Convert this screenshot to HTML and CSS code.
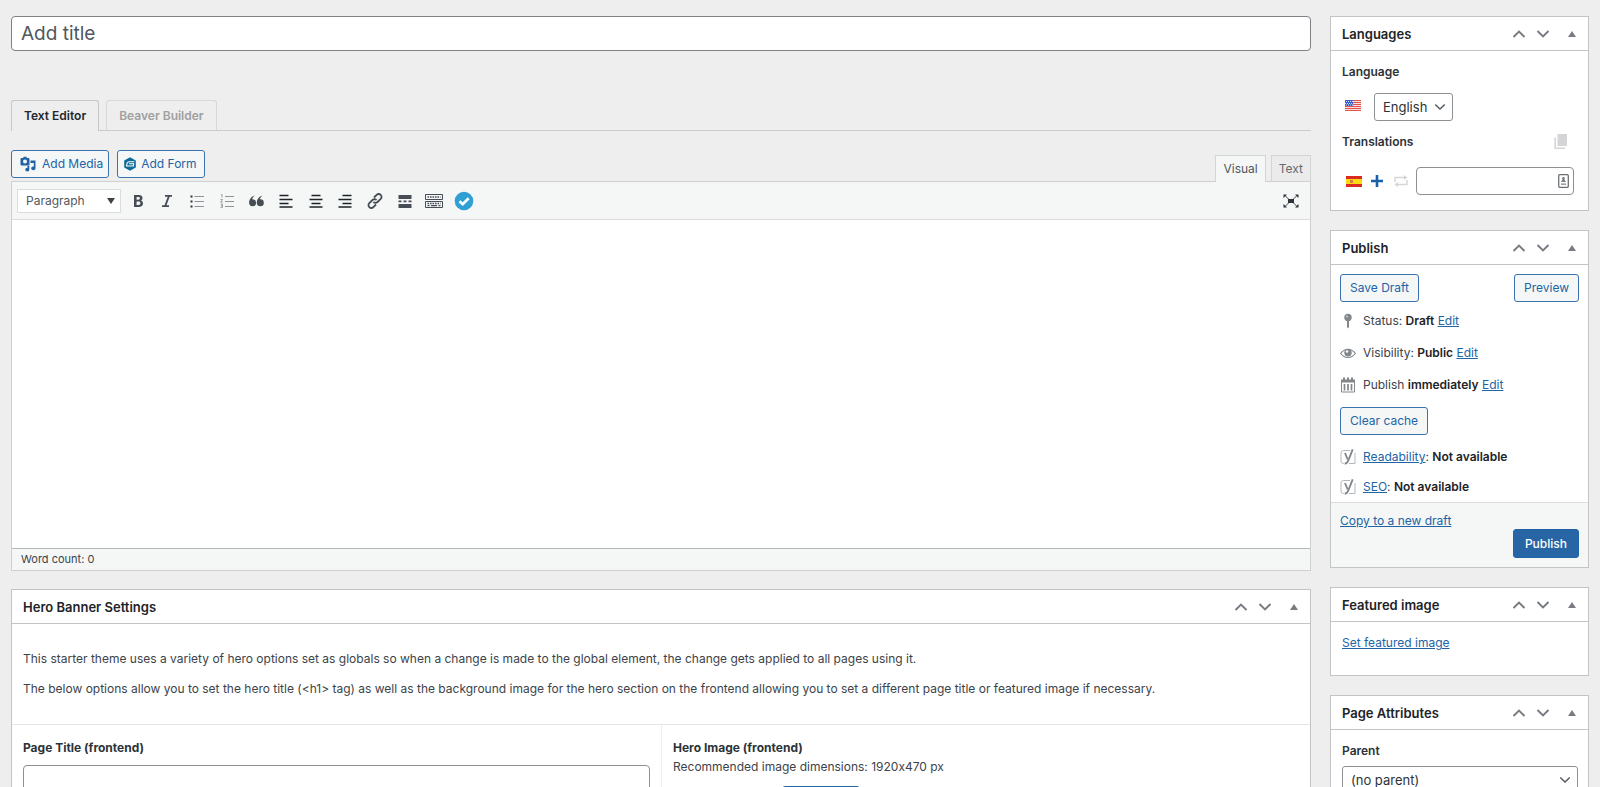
FILE: index.html
```html
<!DOCTYPE html>
<html lang="en">
<head>
    <meta charset="UTF-8">
    <meta name="viewport" content="width=device-width, initial-scale=1.0">
    <title>Add New Page</title>
    <link rel="stylesheet" href="styles.css">
</head>
<body>
    <!-- shared icons -->
    <svg class="sprite" aria-hidden="true">
        <symbol id="chevron-up" viewBox="0 0 14 14"><path d="M1.5 10 7 4.6 12.5 10" fill="none" stroke="currentColor" stroke-width="2"/></symbol>
        <symbol id="chevron-down" viewBox="0 0 14 14"><path d="M1.5 4 7 9.4 12.5 4" fill="none" stroke="currentColor" stroke-width="2"/></symbol>
        <symbol id="triangle-up" viewBox="0 0 8 6"><path d="M4 0 8 6H0z" fill="currentColor"/></symbol>
        <symbol id="yoast" viewBox="0 0 16 16">
            <path d="M10 1.500H3.500A2.500 2.500 0 0 0 1 4v8a2.500 2.500 0 0 0 2.500 2.500H4M15 4v10.500H9" fill="none" stroke="#b4b7ba" stroke-width="1"/>
            <path d="M5 4 7.700 10.500" fill="none" stroke="#82878c" stroke-width="1.900"/>
            <path d="M12.700.3 8.500 11C7.600 13.500 6.800 14.600 4.700 14.800" fill="none" stroke="#82878c" stroke-width="1.900"/>
        </symbol>
    </svg>

    <div class="wrap">
        <main class="main">
            <input class="title-input" type="text" placeholder="Add title" aria-label="Add title">

            <div class="builder-tabs">
                <a class="builder-tab active" href="#editor">Text Editor</a>
                <a class="builder-tab" href="#builder">Beaver Builder</a>
            </div>

            <div class="editor-tools">
                <div class="media-buttons">
                    <button class="button button-media" type="button">
                        <svg width="16" height="16" viewBox="0 0 16 16"><path fill="currentColor" fill-rule="evenodd" d="M1.500 2H3l.8-1.200h2.500L7 2h1.500a1 1 0 0 1 1 1v5.500a1 1 0 0 1-1 1h-7a1 1 0 0 1-1-1V3a1 1 0 0 1 1-1zM5 3.600a2 2 0 1 0 0 4 2 2 0 0 0 0-4z"/><path fill="currentColor" d="M10.500 4.500H15.500V12.300a2.200 1.900 0 1 1-1.700-1.800V7H10.500zM9.300 9.500V13.500a2 1.900 0 1 1-1.700-1.800V10.500H6.500l2.800-1z"/></svg>
                        Add Media
                    </button>
                    <button class="button button-form" type="button">
                        <svg width="12" height="14" viewBox="0 0 12 14"><path fill="#0e6a96" d="M6 .2 11.800 3.500v7L6 13.800.2 10.500v-7z"/><path d="M10.300 4.700H5.200C3.500 4.700 2.700 6 2.500 9h6.800l.3-2.200H5" fill="none" stroke="#fff" stroke-width="1.100"/></svg>
                        Add Form
                    </button>
                </div>
                <div class="switch-tabs">
                    <button class="switch-tab active" type="button">Visual</button>
                    <button class="switch-tab" type="button">Text</button>
                </div>
            </div>

            <section class="editor" id="editor">
                <div class="toolbar">
                    <div class="select-wrap format-select">
                        <select aria-label="Format">
                            <option>Paragraph</option>
                        </select>
                        <svg width="8" height="6" viewBox="0 0 8 6"><path d="M0 0h8L4 6z" fill="#3c434a"/></svg>
                    </div>
                    <div class="tools">
                        <button class="tool" type="button" title="Bold"><svg width="16" height="16" viewBox="0 0 16 16"><path fill="currentColor" fill-rule="evenodd" d="M4 2h4.700c2.500 0 3.800 1.100 3.800 3 0 1.300-.7 2.200-1.900 2.600 1.500.3 2.400 1.300 2.400 2.900 0 2.200-1.600 3.500-4.300 3.500H4zm2.600 2v2.700h1.600c1.100 0 1.700-.5 1.700-1.400S9.300 4 8.200 4zm0 4.600V12h1.900c1.200 0 1.900-.6 1.900-1.700s-.7-1.700-1.900-1.700z"/></svg></button>
                        <button class="tool" type="button" title="Italic"><svg width="16" height="16" viewBox="0 0 16 16"><path d="M6 2.900h7M3 13.100h7M10 3 6.200 13" fill="none" stroke="currentColor" stroke-width="1.900"/></svg></button>
                        <button class="tool light" type="button" title="Bulleted list"><svg width="16" height="16" viewBox="0 0 16 16"><path d="M5.500 3.500H15M5.500 8.500H15M5.500 13.500H15" stroke="currentColor"/><path d="M1.500 2.500h2v2h-2zM1.500 7.500h2v2h-2zM1.500 12.500h2v2h-2z" fill="#2c3338"/></svg></button>
                        <button class="tool light" type="button" title="Numbered list"><svg width="16" height="16" viewBox="0 0 16 16"><path d="M6 3.500h9M6 8.500h9M6 13.500h9" stroke="currentColor"/><path d="M2 2l1-.7v3.200M1.500 6.500h2L1.700 9.200h2M1.500 11.200h2v3.200h-2M2 12.800h1.500" fill="none" stroke="currentColor" stroke-width=".9"/></svg></button>
                        <button class="tool" type="button" title="Blockquote"><svg width="16" height="16" viewBox="0 0 16 16"><path fill="currentColor" d="M6.900 2.500C5 3.800 4.400 5 4.300 6.300a3.500 3.500 0 1 1-3.200 3.500C1.100 6.200 3.200 3.400 6.900 2.500zM14.600 2.500c-1.900 1.300-2.500 2.500-2.600 3.800a3.500 3.500 0 1 1-3.200 3.500c0-3.600 2.100-6.400 5.800-7.300z"/></svg></button>
                        <button class="tool dark" type="button" title="Align left"><svg width="16" height="16" viewBox="0 0 16 16"><path d="M1.500 2.500h9M1.500 6.500h13M1.500 10.500h9M1.500 14h13" stroke="currentColor" stroke-width="1.500"/></svg></button>
                        <button class="tool dark" type="button" title="Align center"><svg width="16" height="16" viewBox="0 0 16 16"><path d="M3.500 2.500h9M1.500 6.500h13M3.500 10.500h9M1.500 14h13" stroke="currentColor" stroke-width="1.500"/></svg></button>
                        <button class="tool dark" type="button" title="Align right"><svg width="16" height="16" viewBox="0 0 16 16"><path d="M5.500 2.500h9M1.500 6.500h13M5.500 10.500h9M1.500 14h13" stroke="currentColor" stroke-width="1.500"/></svg></button>
                        <button class="tool" type="button" title="Insert link"><svg width="18" height="18" viewBox="0 0 18 18"><g fill="none" stroke="currentColor" stroke-width="1.800"><path d="M8 5.500l2.600-2.600a2.800 2.800 0 0 1 4.100 0 2.800 2.800 0 0 1 0 4L11.500 10a2.800 2.800 0 0 1-4 0"/><path d="M10 12.500l-2.600 2.600a2.800 2.800 0 0 1-4.100 0 2.800 2.800 0 0 1 0-4L6.500 8a2.800 2.800 0 0 1 4 0"/></g></svg></button>
                        <button class="tool" type="button" title="Read more"><svg width="16" height="16" viewBox="0 0 16 16"><path d="M1.500 2h13v4h-13zM1.500 11h13v4h-13zM1.500 7.600h3v1.600h-3zM6.500 7.600h3v1.600h-3zM11.500 7.600h3v1.600h-3z" fill="currentColor"/></svg></button>
                        <button class="tool" type="button" title="Toolbar toggle"><svg width="18" height="16" viewBox="0 0 18 16"><path d="M.5 1.500h17v5H.5zM.5 8.500h17v6H.5z" fill="none" stroke="currentColor"/><path d="M2.500 4h13M2.500 10.500h13" stroke="currentColor" stroke-width="1.500" stroke-dasharray="1.600 .9"/><path d="M2.500 12.700h2M6 12.700h6M13.500 12.700h2" stroke="currentColor" stroke-width="1.200"/></svg></button>
                        <button class="tool" type="button" title="Check"><svg width="20" height="20" viewBox="0 0 20 20"><circle cx="10" cy="10" r="9.300" fill="#2f9fd4"/><path d="M5.500 10.200l3.200 3 6-6" fill="none" stroke="#fff" stroke-width="2.700"/></svg></button>
                    </div>
                    <button class="tool fullscreen" type="button" title="Fullscreen"><svg width="16" height="14" viewBox="0 0 16 14"><path d="M5 5h6v4H5z" fill="currentColor"/><path d="M2 1.500l3.500 3.500M14 1.500l-3.500 3.500M2 12.500l3.500-3.500M14 12.500l-3.500-3.500" stroke="currentColor" stroke-width=".9"/><path d="M.5.500h3.500L.5 4zM15.500.500H12L15.500 4zM.5 13.500h3.500L.5 10zM15.500 13.500H12l3.500-3.500z" fill="currentColor"/></svg></button>
                </div>
                <textarea class="editor-content" aria-label="Content"></textarea>
                <div class="editor-status">Word count: 0</div>
            </section>

            <section class="box hero">
                <header class="box-header">
                    <h2>Hero Banner Settings</h2>
                    <button class="handle" type="button" title="Move up"><svg><use href="#chevron-up"/></svg></button>
                    <button class="handle" type="button" title="Move down"><svg><use href="#chevron-down"/></svg></button>
                    <button class="handle toggle" type="button" title="Toggle panel"><svg><use href="#triangle-up"/></svg></button>
                </header>
                <div class="hero-message">
                    <p>This starter theme uses a variety of hero options set as globals so when a change is made to the global element, the change gets applied to all pages using it.</p>
                    <p>The below options allow you to set the hero title (&lt;h1&gt; tag) as well as the background image for the hero section on the frontend allowing you to set a different page title or featured image if necessary.</p>
                </div>
                <div class="hero-fields">
                    <div class="field">
                        <label for="page-title">Page Title (frontend)</label>
                        <input id="page-title" type="text">
                    </div>
                    <div class="field">
                        <h3>Hero Image (frontend)</h3>
                        <p>Recommended image dimensions: 1920x470 px</p>
                        <button class="button image-button" type="button" aria-label="Add image"></button>
                    </div>
                </div>
            </section>
        </main>

        <aside class="sidebar">
            <section class="box languages">
                <header class="box-header">
                    <h2>Languages</h2>
                    <button class="handle" type="button" title="Move up"><svg><use href="#chevron-up"/></svg></button>
                    <button class="handle" type="button" title="Move down"><svg><use href="#chevron-down"/></svg></button>
                    <button class="handle toggle" type="button" title="Toggle panel"><svg><use href="#triangle-up"/></svg></button>
                </header>
                <div class="languages-body">
                    <label class="field-label" for="language">Language</label>
                    <div class="language-row">
                        <svg class="flag" width="16" height="11" viewBox="0 0 16 11"><path fill="#f8dcdc" d="M0 0h16v11H0z"/><path d="M0 .5h16M0 2.500h16M0 4.500h16M0 6.500h16M0 8.500h16M0 10.500h16" stroke="#e0564f"/><path fill="#3d62c9" d="M0 0h8v6H0z"/><path d="M1 1.500h7M0 3.500h7M1 5h7" stroke="#c9d7f8" stroke-dasharray="1 1"/></svg>
                        <div class="select-wrap language-select">
                            <select id="language">
                                <option>English</option>
                            </select>
                            <svg width="12" height="12" viewBox="0 0 14 14"><path d="M1.500 4 7 9.400 12.500 4" fill="none" stroke="currentColor" stroke-width="1.600"/></svg>
                        </div>
                    </div>
                    <div class="translations-head">
                        <label class="field-label" for="translation">Translations</label>
                        <svg width="14" height="16" viewBox="0 0 14 16"><path d="M3.500 0H13v12H3.500z" fill="#d5d5d7"/><path d="M1.200 3.500v10.700H11" fill="none" stroke="#d5d5d7" stroke-width="1.600"/></svg>
                    </div>
                    <div class="translation-row">
                        <svg class="flag" width="16" height="11" viewBox="0 0 16 11"><path fill="#d92b1f" d="M0 0h16v11H0z"/><path fill="#fbdc13" d="M0 3h16v5H0z"/><path d="M4 4h3v3H4z" fill="#dd7a3a"/></svg>
                        <button class="icon-button add" type="button" title="Add translation"><svg width="12" height="12" viewBox="0 0 12 12"><path d="M6 0v12M0 6h12" stroke="currentColor" stroke-width="2.600"/></svg></button>
                        <button class="icon-button sync" type="button" title="Synchronize"><svg width="14" height="12" viewBox="0 0 14 12"><path d="M1 7V2.500h10M13 5v4.500H3" fill="none" stroke="currentColor" stroke-width="1.400"/><path d="M10 0l3.500 2.500L10 5zM4 7 .5 9.500 4 12z" fill="currentColor"/></svg></button>
                        <div class="translation-input">
                            <input id="translation" type="text">
                            <svg width="11" height="14" viewBox="0 0 11 14"><rect x=".7" y=".7" width="9.600" height="12.600" rx="1" fill="#fff" stroke="#6c7075" stroke-width="1.300"/><path d="M5.500 3a1.400 1.400 0 0 1 1 2.400L8 8H3l1.500-2.600A1.400 1.400 0 0 1 5.500 3zM3 9.500h5v1.200H3z" fill="#7c8085"/></svg>
                        </div>
                    </div>
                </div>
            </section>

            <section class="box publish">
                <header class="box-header">
                    <h2>Publish</h2>
                    <button class="handle" type="button" title="Move up"><svg><use href="#chevron-up"/></svg></button>
                    <button class="handle" type="button" title="Move down"><svg><use href="#chevron-down"/></svg></button>
                    <button class="handle toggle" type="button" title="Toggle panel"><svg><use href="#triangle-up"/></svg></button>
                </header>
                <div class="publish-body">
                    <div class="publish-actions">
                        <button class="button" type="button">Save Draft</button>
                        <button class="button" type="button">Preview</button>
                    </div>
                    <ul class="publish-info">
                        <li>
                            <svg width="16" height="16" viewBox="0 0 16 16"><circle cx="8" cy="4.500" r="3.700" fill="currentColor"/><path d="M7 8h2v6l-1 1.500L7 14z" fill="currentColor"/><circle cx="7" cy="3.500" r="1" fill="#ccc"/></svg>
                            <span>Status: <b>Draft</b> <a href="#status">Edit</a></span>
                        </li>
                        <li>
                            <svg width="16" height="16" viewBox="0 0 16 16"><path d="M.7 8.500C4.500 2.800 11.500 2.800 15.300 8.500 11.500 13.800 4.500 13.800.7 8.500z" fill="none" stroke="currentColor" stroke-width="1.200"/><circle cx="8" cy="7.800" r="3.700" fill="currentColor"/><circle cx="7" cy="6.500" r="1.200" fill="#fff"/></svg>
                            <span>Visibility: <b>Public</b> <a href="#visibility">Edit</a></span>
                        </li>
                        <li>
                            <svg width="16" height="16" viewBox="0 0 16 16"><path d="M1.500 3v12h13V3" fill="none" stroke="currentColor"/><path d="M1 2.500h14v3H1zM3 .5h2v3H3zM7 .5h2v3H7zM11 .5h2v3h-2z" fill="currentColor"/><path d="M4.500 7v6.500M8 7v6.500M11.500 7v6.500" stroke="currentColor" stroke-width="1.700"/></svg>
                            <span>Publish <b>immediately</b> <a href="#schedule">Edit</a></span>
                        </li>
                    </ul>
                    <button class="button" type="button">Clear cache</button>
                    <ul class="yoast-info">
                        <li><svg width="16" height="16"><use href="#yoast"/></svg><span><a href="#readability">Readability</a>: <b>Not available</b></span></li>
                        <li><svg width="16" height="16"><use href="#yoast"/></svg><span><a href="#seo">SEO</a>: <b>Not available</b></span></li>
                    </ul>
                </div>
                <footer class="publish-footer">
                    <a href="#copy">Copy to a new draft</a>
                    <button class="button primary" type="button">Publish</button>
                </footer>
            </section>

            <section class="box featured">
                <header class="box-header">
                    <h2>Featured image</h2>
                    <button class="handle" type="button" title="Move up"><svg><use href="#chevron-up"/></svg></button>
                    <button class="handle" type="button" title="Move down"><svg><use href="#chevron-down"/></svg></button>
                    <button class="handle toggle" type="button" title="Toggle panel"><svg><use href="#triangle-up"/></svg></button>
                </header>
                <div class="featured-body">
                    <a href="#featured">Set featured image</a>
                </div>
            </section>

            <section class="box attributes">
                <header class="box-header">
                    <h2>Page Attributes</h2>
                    <button class="handle" type="button" title="Move up"><svg><use href="#chevron-up"/></svg></button>
                    <button class="handle" type="button" title="Move down"><svg><use href="#chevron-down"/></svg></button>
                    <button class="handle toggle" type="button" title="Toggle panel"><svg><use href="#triangle-up"/></svg></button>
                </header>
                <div class="attributes-body">
                    <label class="field-label" for="parent">Parent</label>
                    <div class="select-wrap parent-select">
                        <select id="parent">
                            <option>(no parent)</option>
                        </select>
                        <svg width="12" height="12" viewBox="0 0 14 14"><path d="M1.500 4 7 9.400 12.500 4" fill="none" stroke="currentColor" stroke-width="1.600"/></svg>
                    </div>
                </div>
            </section>
        </aside>
    </div>
</body>
</html>
```
FILE: styles.css
```css
* {
    box-sizing: border-box;
}

body {
    margin: 0;
    background: #eeeeee;
    color: #3c434a;
    font-family: Inter, "Liberation Sans", sans-serif;
    font-size: 12px;
    font-variant-ligatures: no-contextual;
    line-height: 18px;
}

h2,
h3,
p,
ul {
    margin: 0;
    padding: 0;
    list-style: none;
}

button,
input,
select,
textarea {
    margin: 0;
    font: inherit;
    color: inherit;
}

button,
select {
    cursor: pointer;
}

a {
    color: #2164a6;
}

b {
    color: #1d2327;
    font-weight: 600;
}

svg {
    display: block;
    flex: none;
}

.sprite {
    position: absolute;
    width: 0;
    height: 0;
}

.wrap {
    display: grid;
    grid-template-columns: minmax(0, 1fr) 259px;
    gap: 19px;
    height: 100vh;
    padding: 16px 11px 0;
    overflow: hidden;
}

.title-input {
    display: block;
    width: 100%;
    height: 35px;
    padding: 0 9px;
    border: 1px solid #7e8287;
    border-radius: 4px;
    background: #fff;
    font-size: 19px;
}

.title-input::placeholder {
    color: #50575e;
    opacity: 1;
}

/* Builder tabs */
.builder-tabs {
    display: flex;
    gap: 7px;
    margin-top: 49px;
    border-bottom: 1px solid #ccc;
}

.builder-tab {
    height: 30px;
    padding: 0 12px;
    border: 1px solid #d8d8d8;
    border-bottom: none;
    border-radius: 3px 3px 0 0;
    color: #a0a0a0;
    font-weight: 600;
    line-height: 30px;
    text-decoration: none;
}

.builder-tab.active {
    height: 31px;
    margin-bottom: -1px;
    border-color: #c6c6c6;
    background: #eee;
    color: #23282d;
}

.editor-tools {
    display: flex;
    justify-content: space-between;
    margin-top: 19px;
}

.media-buttons {
    display: flex;
    gap: 8px;
    padding-bottom: 3px;
}

.button {
    display: inline-flex;
    align-items: center;
    height: 28px;
    padding: 0 9px;
    border: 1px solid #3a72b0;
    border-radius: 3px;
    background: #f5f7f7;
    color: #2164a6;
    white-space: nowrap;
}

.button-media {
    gap: 6px;
    padding: 0 5px 0 8px;
}

.button-form {
    gap: 5px;
    padding: 0 7px 0 6px;
}

.button.primary {
    height: 29px;
    border-color: #2164a6;
    padding: 0 11px;
    background: #2765a5;
    color: #fff;
    font-weight: 500;
}

.switch-tabs {
    display: flex;
    align-items: flex-end;
    gap: 5px;
}

.switch-tab {
    height: 26px;
    padding: 0 7px;
    border: 1px solid #d3d4d6;
    border-bottom: none;
    background: #ebebeb;
    color: #646970;
}

.switch-tab.active {
    height: 27px;
    margin-bottom: -1px;
    background: #f5f7f7;
    color: #50575e;
}

/* Editor */
.editor {
    border: 1px solid #cfd0d2;
}

.toolbar {
    display: flex;
    align-items: center;
    height: 38px;
    padding: 0 10px 0 5px;
    border-bottom: 1px solid #dcdcde;
    background: #f5f7f7;
}

.select-wrap {
    display: grid;
    align-items: center;
}

.select-wrap select {
    grid-area: 1 / 1;
    width: 100%;
    border: 1px solid #8c8f94;
    border-radius: 3px;
    background: #fff;
    color: #2c3338;
    appearance: none;
}

.select-wrap svg {
    grid-area: 1 / 1;
    justify-self: end;
    margin-right: 7px;
    color: #50575e;
    pointer-events: none;
}

.format-select {
    width: 104px;
}

.format-select select {
    height: 24px;
    padding: 0 8px;
    border-color: #dcdcde;
    border-radius: 0;
    color: #50575e;
}

.format-select svg {
    margin-right: 6px;
}

.tools {
    display: grid;
    grid-template-columns: repeat(12, 1fr);
    width: 356px;
    margin-left: 2px;
}

.tool {
    display: flex;
    align-items: center;
    justify-content: center;
    height: 26px;
    padding: 0;
    border: none;
    background: none;
    color: #464d54;
}

.tool.light {
    color: #8f9499;
}

.tool.dark {
    color: #1d2327;
}

.tool.fullscreen {
    width: 18px;
    margin-left: auto;
    color: #2c3338;
}

.editor-content {
    display: block;
    width: 100%;
    height: 328px;
    padding: 8px;
    border: none;
    outline: none;
    background: #fff;
    resize: none;
}

.editor-status {
    padding: 1px 9px 2px;
    border-top: 1px solid #b4b6b9;
    background: #f5f7f7;
    font-size: 11px;
}

/* Boxes */
.box {
    border: 1px solid #c3c4c7;
    background: #fff;
}

.box-header {
    display: flex;
    align-items: center;
    height: 34px;
    padding: 0 9px 0 11px;
    border-bottom: 1px solid #c3c4c7;
}

.box-header h2 {
    flex: 1;
    color: #1d2327;
    font-size: 13px;
    font-weight: 600;
}

.handle {
    display: flex;
    align-items: center;
    justify-content: center;
    width: 24px;
    height: 24px;
    padding: 0;
    border: none;
    background: none;
    color: #787c82;
}

.handle svg {
    width: 14px;
    height: 14px;
}

.handle.toggle {
    width: 14px;
    margin-left: 10px;
}

.handle.toggle svg {
    width: 8px;
    height: 6px;
}

.hero {
    margin-top: 18px;
}

.hero-message {
    display: grid;
    gap: 12px;
    padding: 26px 11px;
}

.hero-fields {
    display: grid;
    grid-template-columns: 1fr 1fr;
    border-top: 1px solid #e5e5e5;
}

.field {
    padding: 14px 11px;
}

.field + .field {
    border-left: 1px solid #eee;
}

.field label,
.field h3 {
    display: block;
    color: #2c3338;
    font-size: 12px;
    font-weight: 700;
}

.field input {
    width: 100%;
    height: 30px;
    margin-top: 8px;
    border: 1px solid #8c8f94;
    border-radius: 4px;
}

.field p {
    margin-top: 1px;
}

.image-button {
    width: 78px;
    margin-top: 10px;
    margin-left: 109px;
    border-color: #2164a6;
}

/* Sidebar */
.sidebar {
    display: flex;
    flex-direction: column;
    gap: 19px;
}

.field-label {
    color: #2c3338;
    font-weight: 600;
}

.languages-body {
    padding: 12px 14px 15px 11px;
}

.language-row {
    display: flex;
    gap: 13px;
    margin-top: 12px;
    padding-left: 3px;
}

.language-row .flag {
    margin-top: 7px;
}

.language-select {
    width: 79px;
}

.language-select select,
.parent-select select {
    height: 28px;
    padding: 0 8px;
    font-size: 13px;
}

.translations-head {
    display: flex;
    justify-content: space-between;
    align-items: center;
    margin-top: 12px;
    padding-right: 6px;
}

.translation-row {
    display: flex;
    align-items: center;
    margin-top: 16px;
    padding-left: 4px;
}

.icon-button {
    display: flex;
    margin-left: 9px;
    padding: 0;
    border: none;
    background: none;
}

.icon-button.add {
    color: #1a60a8;
}

.icon-button.sync {
    margin-left: 11px;
    color: #d5d5d7;
}

.translation-input {
    display: grid;
    flex: 1;
    align-items: center;
    margin-left: 8px;
}

.translation-input input {
    grid-area: 1 / 1;
    width: 100%;
    min-width: 0;
    height: 28px;
    padding: 0 20px 0 8px;
    border: 1px solid #8c8f94;
    border-radius: 4px;
}

.translation-input svg {
    grid-area: 1 / 1;
    justify-self: end;
    margin-right: 5px;
}

.publish-body {
    padding: 9px 9px 6px;
}

.publish-actions {
    display: flex;
    justify-content: space-between;
}

.publish-info,
.yoast-info {
    display: grid;
    gap: 14px;
    padding: 10px 0 13px;
}

.yoast-info {
    gap: 12px;
    padding: 13px 0 0;
}

.publish-info li,
.yoast-info li {
    display: flex;
    align-items: center;
    gap: 7px;
}

.publish-info svg {
    color: #82878c;
}

.publish-footer {
    display: flex;
    justify-content: space-between;
    align-items: flex-start;
    padding: 9px;
    border-top: 1px solid #dcdcde;
    background: #f5f7f7;
}

.publish-footer .button {
    margin-top: 17px;
}

.featured-body {
    padding: 12px 11px 23px;
}

.attributes-body {
    padding: 12px 10px 12px 11px;
}

.parent-select {
    margin-top: 6px;
}
```
